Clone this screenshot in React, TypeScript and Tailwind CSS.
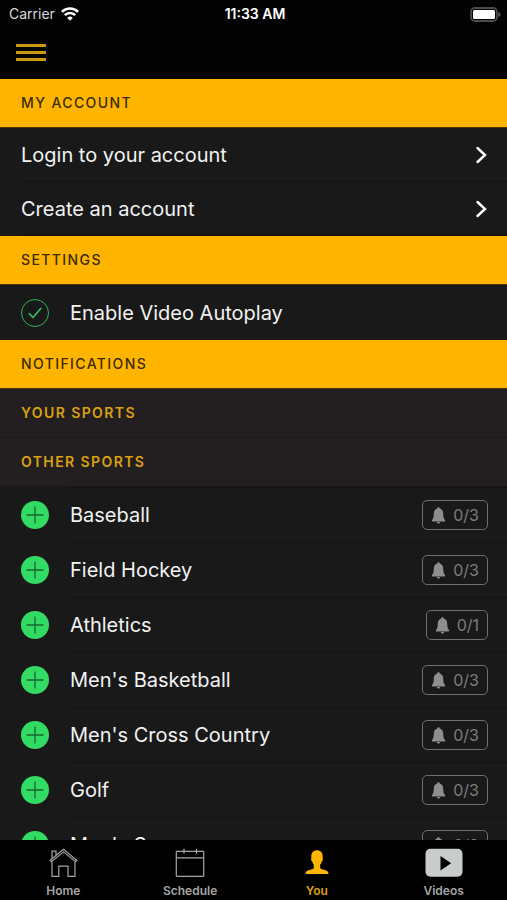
import type { ReactNode } from "react"

const accountLinks = [
  { id: "login", label: "Login to your account" },
  { id: "create", label: "Create an account" },
]

const sports = [
  { name: "Baseball", alerts: "0/3" },
  { name: "Field Hockey", alerts: "0/3" },
  { name: "Athletics", alerts: "0/1" },
  { name: "Men's Basketball", alerts: "0/3" },
  { name: "Men's Cross Country", alerts: "0/3" },
  { name: "Golf", alerts: "0/3" },
  { name: "Men's Soccer", alerts: "0/3" },
]

function WifiIcon() {
  return (
    <svg className="h-[14px] w-[18px]" viewBox="0 0 18 14" fill="none" stroke="#fff" strokeWidth="2.6" aria-hidden="true">
      <path d="M0.9 4.9a11.5 11.5 0 0 1 16.2 0" />
      <path d="M3.8 8.2a7.4 7.4 0 0 1 10.4 0" />
      <path d="M9 13.8 6.2 10.9a4 4 0 0 1 5.6 0z" fill="#fff" stroke="none" />
    </svg>
  )
}

function BatteryIcon() {
  return (
    <svg className="h-[15px] w-[31px]" viewBox="0 0 31 15" role="img" aria-label="Battery full">
      <rect x="1" y="1" width="26" height="13" rx="4" fill="none" stroke="#4c4c4e" strokeWidth="1.8" />
      <rect x="3" y="3" width="22" height="9" rx="1.5" fill="#fff" />
      <path d="M28.4 5c1.300.5 2.100 1.400 2.100 2.500s-.8 2-2.100 2.500z" fill="#5c5c5e" />
    </svg>
  )
}

function BellIcon() {
  return (
    <svg className="h-[17px] w-[15px]" viewBox="0 0 15 17" fill="#8e8e8e" aria-hidden="true">
      <path d="M7.500 0.300c.7 0 1.200.4 1.300 1.100 2.100.6 3.300 2.300 3.400 4.800.1 3.600.4 5.200 1.400 6.300.5.500.7.800.7 1.200 0 .4-.3.700-.8.700h-12c-.5 0-.8-.3-.8-.7 0-.4.2-.7.700-1.200 1-1.100 1.300-2.700 1.400-6.300.1-2.500 1.300-4.200 3.400-4.800.1-.7.6-1.100 1.300-1.100z" />
      <path d="M5.900 15h3.200c-.1 1-.7 1.600-1.600 1.600s-1.500-.6-1.600-1.600z" />
    </svg>
  )
}

function HomeIcon() {
  return (
    <svg className="h-[30px] w-[30px]" viewBox="0 0 30 30" fill="none" stroke="#a6a6a6" strokeWidth="1.2" aria-hidden="true">
      <path d="M2.200 12.300 15.500 1.200 28.800 12.300 27.600 13.700 15.500 3.900 3.400 13.700z" />
      <path d="M4 10.200V3.200h4v3.600" />
      <path d="M4 13.700v14.600h6.800V18.200h9.200v10.100h7V13.700" />
    </svg>
  )
}

function ScheduleIcon() {
  return (
    <svg className="h-[30px] w-[30px]" viewBox="0 0 30 30" fill="none" stroke="#a6a6a6" strokeWidth="1.2" aria-hidden="true">
      <rect x="1.300" y="3.300" width="27.400" height="25" rx="0.5" />
      <path d="M1.300 9.800h27.400M9 0.800v5M21.500 0.800v5" />
    </svg>
  )
}

function YouIcon() {
  return (
    <svg className="h-[30px] w-[30px]" viewBox="0 0 30 30" fill="#ffb500" aria-hidden="true">
      <path d="M15 2.300c3.500 0 5.700 2.300 5.700 6 0 1-.1 1.500-.1 1.900.5.300.4 1.300 0 2.300-.2.600-.5 1-.9 1.200-.3 1.300-.8 2.300-1.500 3v3.400c.6 1 2.300 1.500 4.400 2 2.500.6 3.700 1.700 4 3.900H3.400c.3-2.200 1.500-3.300 4-3.900 2.100-.5 3.800-1 4.400-2v-3.400c-.7-.7-1.200-1.700-1.500-3-.4-.2-.7-.6-.9-1.200-.4-1-.5-2 0-2.300 0-.4-.1-.9-.1-1.900 0-3.700 2.200-6 5.700-6z" />
    </svg>
  )
}

function VideosIcon() {
  return (
    <svg className="h-[30px] w-[38px]" viewBox="0 0 38 30" aria-hidden="true">
      <rect x="0.500" y="0.800" width="37" height="28" rx="5" fill="#c9cccd" />
      <path d="M15.500 8v14.400l10.600-7.200z" fill="#000" />
    </svg>
  )
}

const tabs = [
  { id: "home", label: "Home", icon: <HomeIcon /> },
  { id: "schedule", label: "Schedule", icon: <ScheduleIcon /> },
  { id: "you", label: "You", icon: <YouIcon /> },
  { id: "videos", label: "Videos", icon: <VideosIcon /> },
]

function SectionHeader({ children }: { children: ReactNode }) {
  return (
    <h2 className="flex h-[49px] items-center border-b border-[#4a3608] bg-[#ffb500] px-[21px] text-sm font-medium tracking-widest text-[#3b2c08]">
      {children}
    </h2>
  )
}

function SubHeader({ children }: { children: ReactNode }) {
  return (
    <h3 className="flex h-[49px] items-center border-b border-[#1a1818] bg-[#231f20] px-[21px] text-sm font-semibold tracking-widest text-[#dba111]">
      {children}
    </h3>
  )
}

export default function App() {
  return (
    <div className="flex h-screen flex-col bg-[#191919] font-['Inter','Liberation_Sans',sans-serif] text-[#f2f2f2]">
      <header className="shrink-0 bg-[#030303]">
        <div className="grid h-7 grid-cols-3 items-center pr-[6px] pl-[9px] text-sm">
          <div className="flex items-center gap-[6px] text-[#d8d8d8]">
            <span>Carrier</span>
            <WifiIcon />
          </div>
          <time className="text-center font-semibold text-white">11:33 AM</time>
          <div className="flex justify-end">
            <BatteryIcon />
          </div>
        </div>
        <div className="flex h-[51px] items-start px-4 pt-4">
          <button type="button" aria-label="Menu" className="flex w-[30px] flex-col gap-1">
            <span className="h-[3px] bg-[#cf9812]" />
            <span className="h-[3px] bg-[#cf9812]" />
            <span className="h-[3px] bg-[#cf9812]" />
          </button>
        </div>
      </header>

      <main className="min-h-0 flex-1 overflow-y-auto text-xl [scrollbar-width:none]">
        <SectionHeader>MY ACCOUNT</SectionHeader>
        <ul>
          {accountLinks.map((link) => (
            <li key={link.id} className="pl-[21px]">
              <a
                href={`#${link.id}`}
                className="flex h-[54px] items-center justify-between border-b border-[#111111] pr-5"
              >
                {link.label}
                <svg
                  className="h-[18px] w-3"
                  viewBox="0 0 12 18"
                  fill="none"
                  stroke="#fff"
                  strokeWidth="2.4"
                  strokeLinecap="round"
                  aria-hidden="true"
                >
                  <path d="M2.500 2 10 9l-7.500 7" />
                </svg>
              </a>
            </li>
          ))}
        </ul>

        <SectionHeader>SETTINGS</SectionHeader>
        <label className="flex h-[55px] items-center gap-[21px] px-[21px]">
          <span className="grid h-7 w-7 place-items-center">
            <input
              type="checkbox"
              defaultChecked
              className="peer col-start-1 row-start-1 h-7 w-7 appearance-none rounded-full border border-[#2fb457]"
            />
            <svg
              className="pointer-events-none invisible col-start-1 row-start-1 h-3 w-[14px] peer-checked:visible"
              viewBox="0 0 14 12"
              fill="none"
              stroke="#35cf63"
              strokeWidth="1.500"
              aria-hidden="true"
            >
              <path d="M0.800 6.300 5 10.500 13.200 1" />
            </svg>
          </span>
          Enable Video Autoplay
        </label>

        <SectionHeader>NOTIFICATIONS</SectionHeader>
        <SubHeader>YOUR SPORTS</SubHeader>
        <SubHeader>OTHER SPORTS</SubHeader>
        <ul>
          {sports.map((sport) => (
            <li key={sport.name} className="flex h-[55px] items-center gap-[21px] pl-[21px]">
              <button type="button" aria-label={`Add ${sport.name}`}>
                <svg className="h-7 w-7" viewBox="0 0 28 28" aria-hidden="true">
                  <circle cx="14" cy="14" r="14" fill="#32dc64" />
                  <path d="M5.500 14h17M14 5.500v17" stroke="#17662f" strokeWidth="1.300" />
                </svg>
              </button>
              <div className="flex h-full flex-1 items-center justify-between border-t border-[#111111] pr-[19px]">
                <span>{sport.name}</span>
                <button
                  type="button"
                  aria-label={`${sport.name} alerts ${sport.alerts}`}
                  className="flex h-[30px] items-center gap-[7px] rounded-[5px] border border-[#6e6e6e] px-2 text-base text-[#7c7c7c]"
                >
                  <BellIcon />
                  {sport.alerts}
                </button>
              </div>
            </li>
          ))}
        </ul>
      </main>

      <nav className="grid h-[60px] shrink-0 grid-cols-4 bg-black">
        {tabs.map((tab) => (
          <a
            key={tab.id}
            href={`#${tab.id}`}
            aria-current={tab.id === "you" ? "page" : undefined}
            className={`flex flex-col items-center gap-[5px] pt-2 text-xs font-semibold ${
              tab.id === "you" ? "text-[#dba111]" : "text-[#a6a6a6]"
            }`}
          >
            {tab.icon}
            <span>{tab.label}</span>
          </a>
        ))}
      </nav>
    </div>
  )
}
